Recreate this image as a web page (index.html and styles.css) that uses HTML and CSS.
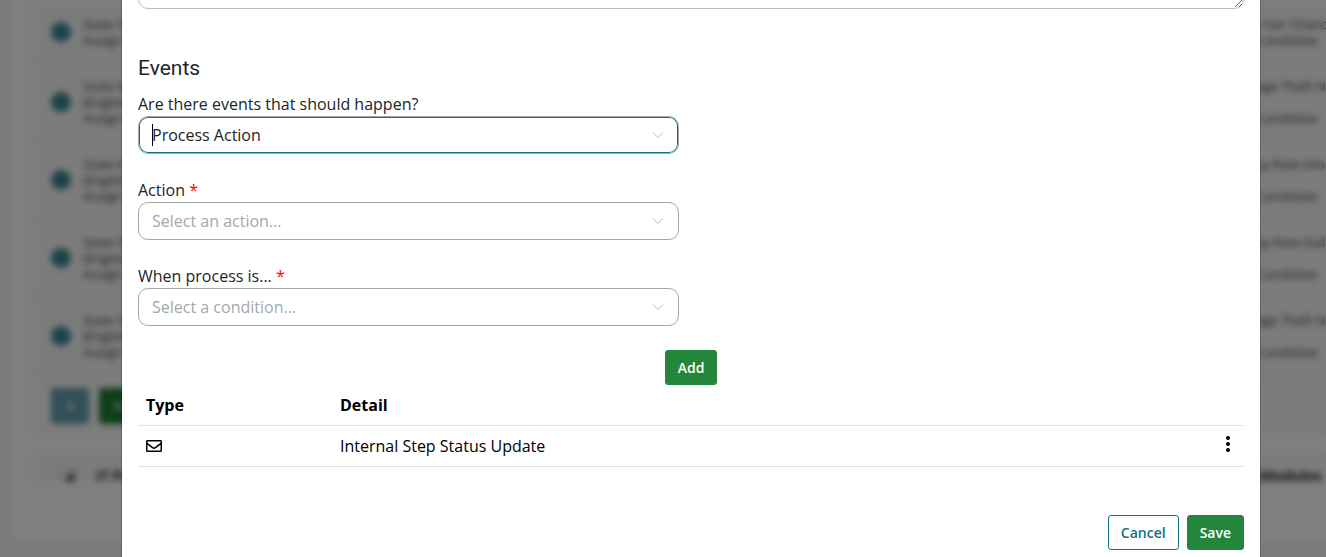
FILE: index.html
```html
<!DOCTYPE html>
<html lang="en">
    <head>
        <meta charset="UTF-8" />
        <meta name="viewport" content="width=device-width, initial-scale=1.0" />
        <title>Edit Step</title>
        <link rel="stylesheet" href="styles.css">
    </head>
    <body>
        <main class="page" aria-hidden="true">
            <div class="page-panel">
                <section class="card">
                    <div class="step">
                        <span class="avatar"></span>
                        <p class="step-text">State Of<br>Assign to</p>
                        <p class="step-text step-side">- Fair Chanc<br>Candidate</p>
                    </div>
                    <div class="step">
                        <span class="avatar"></span>
                        <p class="step-text">State Wage<br>(English)<br>Assign to</p>
                        <p class="step-text step-side">age Theft N<br><br>Candidate</p>
                    </div>
                    <div class="step">
                        <span class="avatar"></span>
                        <p class="step-text">State NY<br>(English)<br>Assign to</p>
                        <p class="step-text step-side">ay Rate (Hou<br><br>Candidate</p>
                    </div>
                    <div class="step">
                        <span class="avatar"></span>
                        <p class="step-text">State NY<br>(English)<br>Assign to</p>
                        <p class="step-text step-side">ay Rate (Sala<br><br>Candidate</p>
                    </div>
                    <div class="step">
                        <span class="avatar"></span>
                        <p class="step-text">State Of<br>(English)<br>Assign to</p>
                        <p class="step-text step-side">age Theft N<br><br>Candidate</p>
                    </div>
                    <div class="card-actions">
                        <button class="tile tile-teal" type="button" tabindex="-1">+</button>
                        <button class="tile tile-green" type="button" tabindex="-1">+</button>
                    </div>
                </section>
                <section class="card card-next">
                    <span class="round">&#9698;</span>
                    <strong class="next-title">IT Pro</strong>
                    <strong class="next-side">tModules</strong>
                </section>
            </div>
        </main>

        <div class="overlay">
            <form class="modal" role="dialog" aria-labelledby="events-title">
                <textarea class="notes" aria-label="Description"></textarea>

                <h2 class="title" id="events-title">Events</h2>

                <div class="fields">
                    <div class="field">
                        <label for="event">Are there events that should happen?</label>
                        <div class="select-box focused">
                            <select id="event">
                                <option>Process Action</option>
                            </select>
                            <span class="caret"></span>
                            <svg class="chevron" viewBox="0 0 12 12"><path d="M1 3.5 6 8.5 11 3.5" /></svg>
                        </div>
                    </div>
                    <div class="field">
                        <label for="action">Action <span class="required">*</span></label>
                        <div class="select-box empty">
                            <select id="action">
                                <option>Select an action...</option>
                            </select>
                            <svg class="chevron" viewBox="0 0 12 12"><path d="M1 3.5 6 8.5 11 3.5" /></svg>
                        </div>
                    </div>
                    <div class="field">
                        <label for="condition">When process is... <span class="required">*</span></label>
                        <div class="select-box empty">
                            <select id="condition">
                                <option>Select a condition...</option>
                            </select>
                            <svg class="chevron" viewBox="0 0 12 12"><path d="M1 3.5 6 8.5 11 3.5" /></svg>
                        </div>
                    </div>
                </div>

                <div class="add-row">
                    <button class="btn btn-green" type="button">Add</button>
                </div>

                <table class="events">
                    <thead>
                        <tr>
                            <th class="col-type">Type</th>
                            <th>Detail</th>
                            <th class="col-menu"></th>
                        </tr>
                    </thead>
                    <tbody>
                        <tr>
                            <td>
                                <svg class="mail" viewBox="0 0 512 512"><path d="M464 64H48C21.490 64 0 85.490 0 112v288c0 26.510 21.490 48 48 48h416c26.510 0 48-21.490 48-48V112c0-26.510-21.490-48-48-48zm0 48v40.805c-22.422 18.259-58.168 46.651-134.587 106.490-16.841 13.247-50.201 45.072-73.413 44.701-23.208.375-56.579-31.459-73.413-44.701C106.180 199.465 70.425 171.067 48 152.805V112h416zM48 400V214.398c22.914 18.251 55.409 43.862 104.938 82.646 21.857 17.205 60.134 55.186 103.062 54.955 42.717.231 80.509-37.199 103.053-54.947 49.528-38.783 82.032-64.401 104.947-82.653V400H48z" /></svg>
                            </td>
                            <td>Internal Step Status Update</td>
                            <td class="col-menu">
                                <button class="menu" type="button" aria-label="More options">
                                    <svg viewBox="0 0 4 16"><circle cx="2" cy="2" r="2" /><circle cx="2" cy="8" r="2" /><circle cx="2" cy="14" r="2" /></svg>
                                </button>
                            </td>
                        </tr>
                    </tbody>
                </table>

                <div class="footer">
                    <button class="btn btn-outline" type="button">Cancel</button>
                    <button class="btn btn-green" type="submit">Save</button>
                </div>
            </form>
        </div>
    </body>
</html>
```
FILE: styles.css
```css
* {
    box-sizing: border-box;
    margin: 0;
    padding: 0;
}
body {
    font-family: "Open Sans", "Noto Sans", sans-serif;
    font-size: 16px;
    line-height: 24px;
    color: #212529;
    background-color: #f6f6f6;
    height: 100vh;
    overflow: hidden;
}
button,
select,
textarea {
    font: inherit;
}

/* page behind the dialog */
.page {
    height: 100vh;
    padding: 0 0 16px 12px;
}
.page-panel {
    height: 100%;
    padding: 1px 0 0 20px;
    background-color: #fff;
    overflow: hidden;
}
.card {
    background-color: #f8f8f8;
}
.step {
    display: flex;
    align-items: center;
    gap: 12px;
    padding: 15px 0 14px 19px;
    border-bottom: 1px solid #f2f2f2;
}
.avatar {
    flex: none;
    width: 20px;
    height: 20px;
    border-radius: 50%;
    background-color: #3a8794;
}
.step-text {
    font-size: 13px;
    line-height: 16px;
    color: #444;
    white-space: nowrap;
}
.step-side {
    width: 70px;
    margin-left: auto;
}
.card-actions {
    display: flex;
    gap: 10px;
    padding: 13px 19px 11px;
}
.tile {
    width: 38px;
    height: 36px;
    border: none;
    border-radius: 3px;
    color: #fff;
    font-weight: 700;
}
.tile-teal {
    background-color: #64a0ae;
}
.tile-green {
    background-color: #1d7e2e;
}
.card-next {
    display: flex;
    align-items: center;
    height: 28px;
    margin-top: 18px;
    padding: 18px 0 0 24px;
    font-size: 14px;
    overflow: hidden;
}
.round {
    width: 24px;
    height: 24px;
    border-radius: 50%;
    background-color: #eee;
    text-align: center;
}
.next-title {
    margin-left: 16px;
}
.next-side {
    width: 70px;
    margin-left: auto;
}

/* dialog */
.overlay {
    position: fixed;
    inset: 0;
    padding: 0 65px 0 121px;
    background-color: rgba(0, 0, 0, 0.5);
    backdrop-filter: blur(3px);
    overflow: hidden;
}
.modal {
    margin-top: -51px;
    min-height: 660px;
    padding: 0 16px;
    border: 1px solid rgba(0, 0, 0, 0.2);
    border-top: none;
    background-color: #fff;
    background-clip: padding-box;
}
.notes {
    display: block;
    width: 100%;
    height: 60px;
    border: 1px solid #bbb;
    border-radius: 10px;
    resize: vertical;
}
.title {
    margin: 47px 0 12px;
    font-family: Roboto, sans-serif;
    font-size: 21px;
    font-weight: 400;
    line-height: 24px;
}
.fields {
    display: grid;
    gap: 24px;
    width: calc(50% - 12px);
}
.field label {
    display: block;
}
.required {
    color: #f00;
}
.select-box {
    position: relative;
}
.select-box select {
    display: block;
    width: 100%;
    height: 38px;
    padding: 0 36px 0 13px;
    border: 1px solid #a7a7a7;
    border-radius: 10px;
    background-color: #fff;
    color: #212529;
    appearance: none;
    outline: none;
}
.select-box.empty select {
    color: #a2a7ae;
}
.select-box.focused select {
    box-shadow: inset 0 0 0 1px #147083;
}
.caret {
    position: absolute;
    top: 8px;
    left: 14px;
    width: 1px;
    height: 22px;
    background-color: #000;
}
.chevron {
    position: absolute;
    top: 13px;
    right: 15px;
    width: 12px;
    height: 12px;
    fill: none;
    stroke: #b8bbbf;
    pointer-events: none;
}
.add-row {
    display: flex;
    justify-content: center;
    margin-top: 24px;
}
.btn {
    height: 35px;
    padding: 0 12px;
    border: 1px solid #23863a;
    border-radius: 3px;
    font-size: 14px;
    font-weight: 600;
    line-height: 20px;
    cursor: pointer;
}
.btn-green {
    background-color: #23863a;
    color: #fff;
}
.btn-outline {
    border-color: #147083;
    background-color: #fff;
    color: #147083;
}
.events {
    width: 100%;
    border-collapse: separate;
    border-spacing: 0;
    table-layout: fixed;
    color: #000;
}
.events th,
.events td {
    height: 41px;
    padding: 0 8px;
    border-bottom: 1px solid #dee2e6;
    text-align: left;
}
.events th {
    font-weight: 700;
}
.events .col-type {
    width: 194px;
}
.events .col-menu {
    width: 80px;
    text-align: right;
}
.mail {
    display: block;
    width: 16px;
    height: 16px;
}
.menu {
    padding: 0 6px;
    border: none;
    background: none;
    cursor: pointer;
}
.menu svg {
    display: block;
    width: 4px;
    height: 16px;
}
.footer {
    display: flex;
    justify-content: flex-end;
    gap: 8px;
    margin-top: 48px;
}
```
